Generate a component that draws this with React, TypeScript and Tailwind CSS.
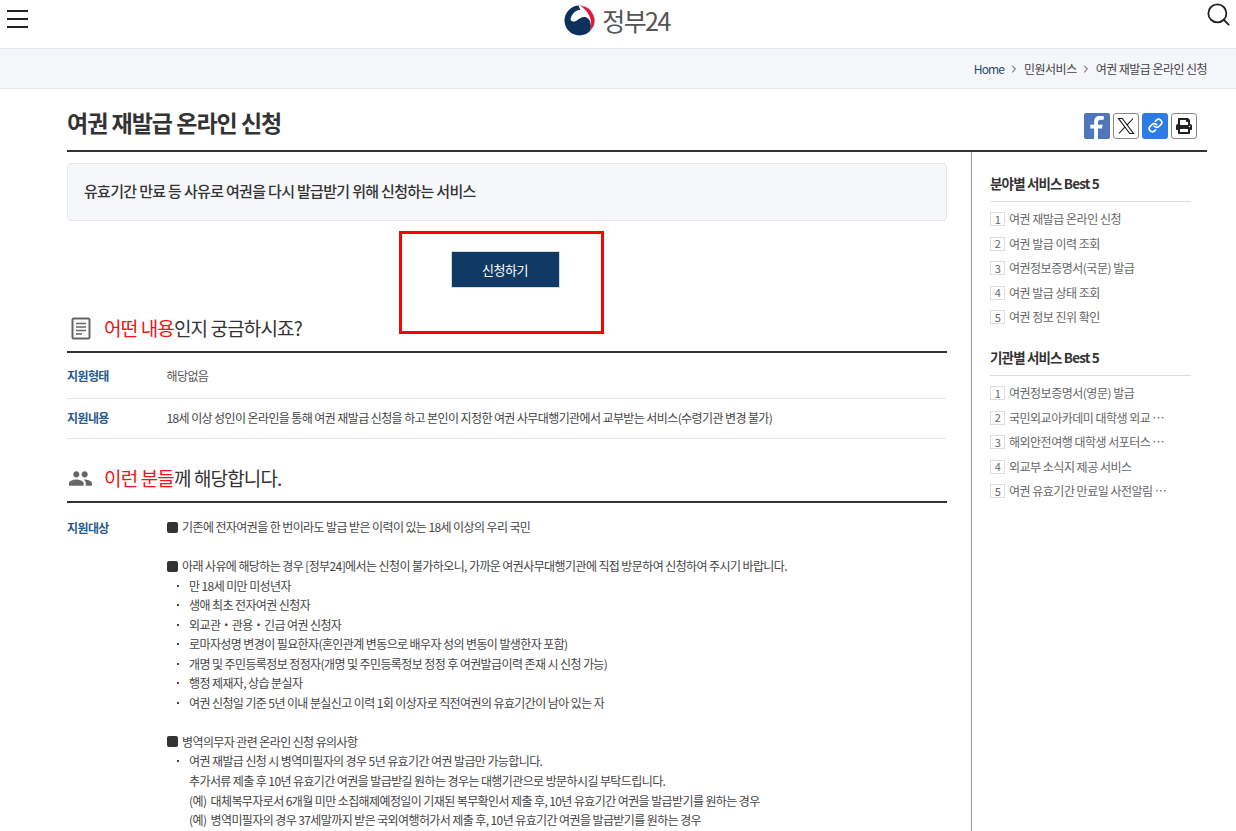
import { Search, ChevronRight, Link } from 'lucide-react';
import { FaPrint } from 'react-icons/fa';
import { MdPeople } from 'react-icons/md';

const FONT = "font-['Noto_Sans_CJK_KR','Noto_Sans',sans-serif]";

const fieldBest = ['여권 재발급 온라인 신청', '여권 발급 이력 조회', '여권정보증명서(국문) 발급', '여권 발급 상태 조회', '여권 정보 진위 확인'];
const orgBest = ['여권정보증명서(영문) 발급', '국민외교아카데미 대학생 외교 …', '해외안전여행 대학생 서포터스 …', '외교부 소식지 제공 서비스', '여권 유효기간 만료일 사전알림 …'];

const group2 = [
  '만 18세 미만 미성년자',
  '생애 최초 전자여권 신청자',
  '외교관・관용・긴급 여권 신청자',
  '로마자성명 변경이 필요한자(혼인관계 변동으로 배우자 성의 변동이 발생한자 포함)',
  '개명 및 주민등록정보 정정자(개명 및 주민등록정보 정정 후 여권발급이력 존재 시 신청 가능)',
  '행정 제재자, 상습 분실자',
  '여권 신청일 기준 5년 이내 분실신고 이력 1회 이상자로 직전여권의 유효기간이 남아 있는 자',
];

function Logo() {
  return (
    <div className="flex items-center gap-[7px]">
      <svg width="31" height="31" viewBox="0 0 32 32">
        <circle cx="16" cy="16" r="15.5" fill="#0f2f5c" />
        <path d="M15 .5A15.500 15.500 0 0 1 27 27C29 20 27 14 22 12.500 17 11 13 18 9 17 7 16.500 6.500 15 7 13.500 9 8 13 5 17 5 16 3.500 15.500 2 15 .5z" fill="#fff" />
        <path d="M17 1A15 15 0 0 1 27 26.500C29.500 19 28 8 17 1z" fill="#e2173c" />
      </svg>
      <span className="text-[25px] leading-[32px] tracking-[-1.6px] text-[#555]">정부24</span>
    </div>
  );
}

function BestList({ title, items }: { title: string; items: string[] }) {
  return (
    <div>
      <h3 className="border-b border-[#ddd] pb-[8px] text-[13.5px] leading-[20px] font-bold tracking-[-0.85px] text-[#333]">{title}</h3>
      <ul className="mt-[5px]">
        {items.map((item, i) => (
          <li key={item} className="flex h-[24.5px] items-center gap-[4px] text-[12px] tracking-[-0.5px] text-[#666]">
            <span className="flex h-[14px] w-[15px] items-center justify-center border border-[#ddd] text-[11px] leading-none">{i + 1}</span>
            <span className="whitespace-nowrap">{item}</span>
          </li>
        ))}
      </ul>
    </div>
  );
}

function SectionHead({ icon, red, rest }: { icon: React.ReactNode; red: string; rest: string }) {
  return (
    <div className="flex h-[46px] items-center gap-[13px] border-b-2 border-[#333] pb-[1px]">
      <span className="flex w-[24px] justify-center pl-[3px] text-[#666]">{icon}</span>
      <h2 className="text-[19px] tracking-[-0.85px] text-[#333]">
        <span className="text-[#f01414]">{red}</span>
        {rest}
      </h2>
    </div>
  );
}

function Square({ children }: { children: string }) {
  return (
    <p className="flex h-[19.5px] items-center gap-[4px]">
      <span className="h-[11px] w-[11px] rounded-[2px] bg-[#333]" />
      {children}
    </p>
  );
}

function Dot({ children }: { children: string }) {
  return (
    <p className="flex h-[19.5px] items-center">
      <span className="w-[22px] pl-[10px]">
        <span className="block h-[2px] w-[2px] bg-[#444]" />
      </span>
      {children}
    </p>
  );
}

export default function App() {
  return (
    <div className={`${FONT} h-[831px] overflow-hidden bg-white`}>
      <header className="flex h-[48px] items-start justify-between pl-[7px] pr-[4px]">
        <svg width="22" height="20" viewBox="0 0 22 20" className="mt-[9px]" stroke="#222" strokeWidth="2">
          <path d="M0 2h21M0 10h21M0 18h21" />
        </svg>
        <div className="mt-[4px]"><Logo /></div>
        <Search className="mt-[1px] h-[27px] w-[27px] text-[#222]" strokeWidth={1.6} />
      </header>

      <nav className="flex h-[41px] items-center justify-end gap-[4px] border-y border-[#e4e6ee] bg-[#f5f6fa] pr-[29px] text-[12px] tracking-[-0.5px] text-[#444]">
        <span className="tracking-[-0.9px] text-[#2c4a6e]">Home</span>
        <ChevronRight className="h-[12px] w-[12px]" />
        <span>민원서비스</span>
        <ChevronRight className="-ml-[1px] h-[12px] w-[12px]" />
        <span className="tracking-[-0.55px]">여권 재발급 온라인 신청</span>
      </nav>

      <main className="pl-[67px] pr-[29px]">
        <div className="flex h-[63px] items-center justify-between border-b-2 border-[#333]">
          <h1 className="pt-[6px] text-[23px] font-bold tracking-[-1px] text-[#333]">여권 재발급 온라인 신청</h1>
          <div className="mr-[10px] mt-[12px] flex gap-[3px]">
            <span className="flex h-[26px] w-[26px] items-end justify-center overflow-hidden rounded-[2px] bg-[#4f76b8]">
              <svg viewBox="0 0 16 24" className="h-[23px] w-[16px]" fill="#fff">
                <path d="M5 24V13H1V9h4V6c0-4 2-6 6-6h4v4h-3c-2 0-3 1-3 3v2h5l-1 4H9v11z" />
              </svg>
            </span>
            <span className="flex h-[26px] w-[26px] items-center justify-center rounded-[3px] border border-[#888]">
              <svg viewBox="0 0 24 24" className="h-[20px] w-[20px]" fill="none" stroke="#111" strokeWidth="1.3">
                <path d="M3 3h4.500L21 21h-4.500zM20.500 3l-7.400 8M10.600 13.400 3.500 21" />
              </svg>
            </span>
            <span className="flex h-[26px] w-[26px] items-center justify-center rounded-[3px] bg-[#2f7be6]">
              <Link className="h-[15px] w-[15px] text-white" strokeWidth={2.6} />
            </span>
            <span className="flex h-[26px] w-[26px] items-center justify-center rounded-[3px] border border-[#888]">
              <FaPrint className="h-[16px] w-[16px] text-[#222]" />
            </span>
          </div>
        </div>

        <div className="flex">
          <div className="w-[880px] shrink-0 pt-[11px]">
            <div className="flex h-[58px] items-center rounded-[4px] border border-[#e6e7ec] bg-[#f6f7fa] px-[16px] pb-[2px] text-[15px] font-medium tracking-[-0.68px] text-[#333]">
              유효기간 만료 등 사유로 여권을 다시 발급받기 위해 신청하는 서비스
            </div>

            <div className="relative flex h-[86px] items-start justify-center pr-[4px] pt-[30px]">
              <button className="h-[37px] w-[109px] border border-[#d5d8dd] bg-[#103a63] text-[13px] tracking-[-0.5px] text-white">신청하기</button>
              <div className="absolute left-[332px] top-[10px] h-[103px] w-[205px] border-[3px] border-[#ff0000]" />
            </div>

            <SectionHead
              icon={
                <svg width="20" height="23" viewBox="0 0 20 23" fill="none" stroke="#666">
                  <rect x="1.500" y="1.500" width="17" height="20" rx="1.500" strokeWidth="2" />
                  <path d="M5 6.500h10M5 10h10M5 13.500h10M5 17h6" strokeWidth="1.500" />
                </svg>
              }
              red="어떤 내용"
              rest="인지 궁금하시죠?"
            />

            <div className="flex h-[46px] items-center border-b border-[#e5e5e5] pt-[1px] text-[12px] tracking-[-0.6px]">
              <span className="w-[99.500px] font-bold text-[#2a5a8c]">지원형태</span>
              <span className="text-[#555]">해당없음</span>
            </div>
            <div className="flex h-[40px] items-center border-b border-[#e5e5e5] pb-[1px] text-[12px] tracking-[-0.6px]">
              <span className="w-[99.500px] font-bold text-[#2a5a8c]">지원내용</span>
              <span className="text-[#444]">18세 이상 성인이 온라인을 통해 여권 재발급 신청을 하고 본인이 지정한 여권 사무대행기관에서 교부받는 서비스(수령기관 변경 불가)</span>
            </div>

            <div className="mt-[18px]">
              <SectionHead icon={<MdPeople className="h-[25px] w-[25px] shrink-0" />} red="이런 분들" rest="께 해당합니다." />
            </div>

            <div className="flex pt-[14.500px] text-[12px] tracking-[-0.6px] text-[#444]">
              <span className="w-[100px] shrink-0 font-bold leading-[19.5px] text-[#2a5a8c]">지원대상</span>
              <div className="whitespace-nowrap">
                <Square>기존에 전자여권을 한 번이라도 발급 받은 이력이 있는 18세 이상의 우리 국민</Square>
                <div className="h-[19.5px]" />
                <Square>아래 사유에 해당하는 경우 [정부24]에서는 신청이 불가하오니, 가까운 여권사무대행기관에 직접 방문하여 신청하여 주시기 바랍니다.</Square>
                {group2.map((t) => (
                  <Dot key={t}>{t}</Dot>
                ))}
                <div className="h-[19.5px]" />
                <Square>병역의무자 관련 온라인 신청 유의사항</Square>
                <Dot>여권 재발급 신청 시 병역미필자의 경우 5년 유효기간 여권 발급만 가능합니다.</Dot>
                <p className="h-[19.5px] pl-[22px] leading-[19.5px]">추가서류 제출 후 10년 유효기간 여권을 발급받길 원하는 경우는 대행기관으로 방문하시길 부탁드립니다.</p>
                <p className="h-[19.5px] pl-[22px] leading-[19.5px]">(예) &nbsp;대체복무자로서 6개월 미만 소집해제예정일이 기재된 복무확인서 제출 후, 10년 유효기간 여권을 발급받기를 원하는 경우</p>
                <p className="h-[19.5px] pl-[22px] leading-[19.5px]">(예) &nbsp;병역미필자의 경우 37세말까지 받은 국외여행허가서 제출 후, 10년 유효기간 여권을 발급받기를 원하는 경우</p>
              </div>
            </div>
          </div>

          <aside className="ml-[24px] h-[700px] flex-1 border-l border-[#999] pl-[18px] pr-[16px] pt-[21px]">
            <BestList title="분야별 서비스 Best 5" items={fieldBest} />
            <div className="mt-[17.5px]">
              <BestList title="기관별 서비스 Best 5" items={orgBest} />
            </div>
          </aside>
        </div>
      </main>
    </div>
  );
}
